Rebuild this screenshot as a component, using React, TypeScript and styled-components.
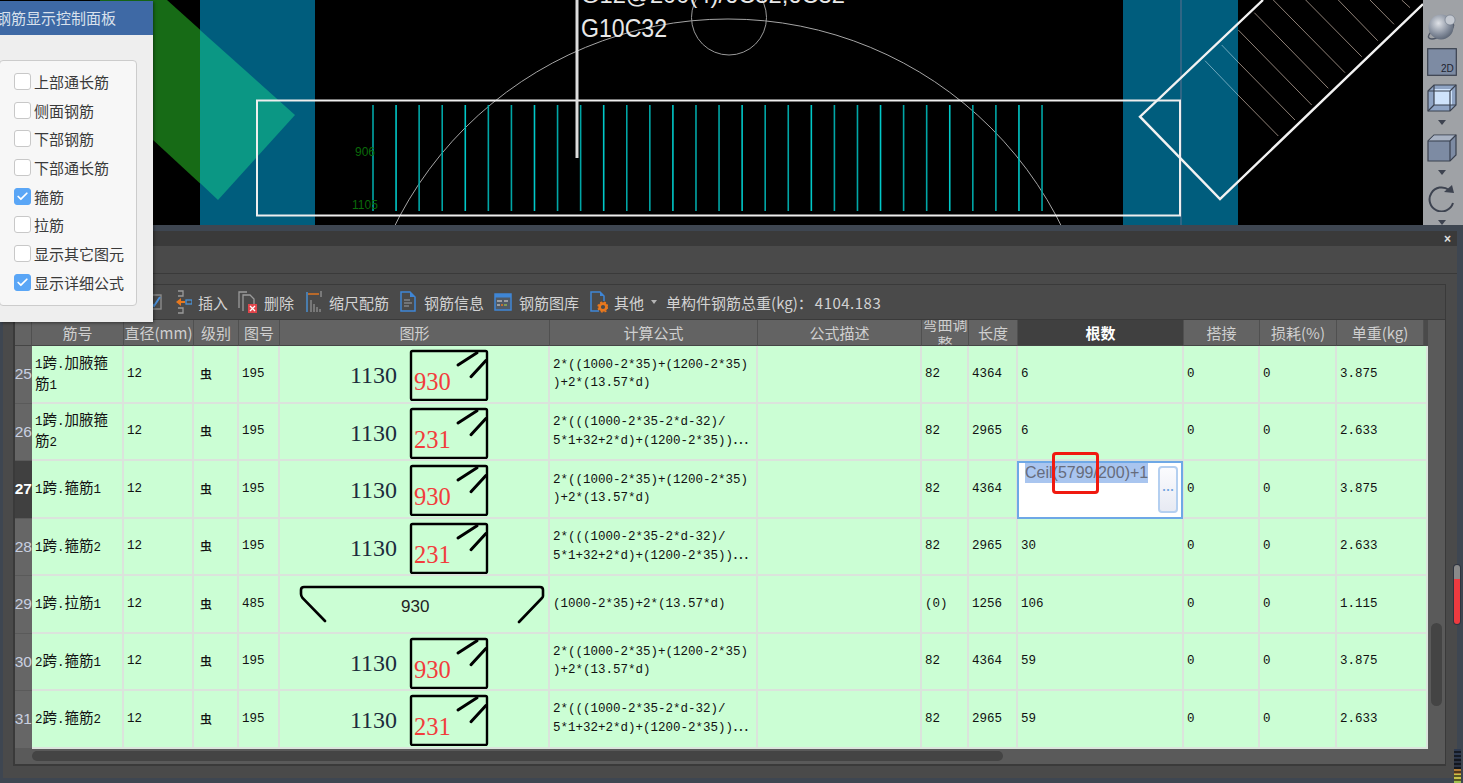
import React from 'react';
import styled, { createGlobalStyle } from 'styled-components';
import { Check } from 'lucide-react';

const CJK = '"Noto Sans CJK SC", "Noto Sans", sans-serif';
const MONO = '"Liberation Mono", "Noto Sans CJK SC", monospace';
const COLUMNS = '17px 92px 70px 45px 41px 270px 208px 164px 47px 49px 166px 76px 77px 91px';

const Global = createGlobalStyle`
  * { box-sizing: border-box; }
  html, body { margin: 0; padding: 0; background: #000; overflow: hidden; }
`;

const Screen = styled.div`
  position: relative;
  width: 1463px;
  height: 783px;
  overflow: hidden;
  display: flex;
  flex-direction: column;
  font-family: ${CJK};
`;

const TopView = styled.div`
  height: 225px;
  flex: none;
  display: flex;
  background: #000;
`;

const CanvasSvg = styled.svg`
  display: block;
  width: 1423px;
  height: 225px;
  flex: none;
`;

const ViewBar = styled.div`
  width: 40px;
  flex: none;
  background: #9fa2a6;
  padding: 12px 7px 0 4px;
  display: flex;
  flex-direction: column;
  align-items: center;
  gap: 8px;
  overflow: hidden;
`;

const ViewIcon = styled.svg`
  display: block;
  width: 30px;
  height: 28px;
  flex: none;
`;

const ViewCaret = styled.span`
  flex: none;
  width: 0;
  height: 0;
  border-left: 4px solid transparent;
  border-right: 4px solid transparent;
  border-top: 5px solid #3d4350;
  margin-bottom: 1px;
`;

const Window = styled.div`
  position: relative;
  flex: 1;
  display: flex;
  flex-direction: column;
  background: #4a4a4a;
  border-style: solid;
  border-color: #3e4651;
  border-width: 6px 6px 5px 3px;
`;

const TitleBar = styled.div`
  height: 15px;
  flex: none;
  background: #3a3a3a;
  display: flex;
  align-items: center;
  justify-content: flex-end;
  padding: 1px 6px 0 0;
  color: #e0e0e0;
  font: bold 12px "Liberation Sans", sans-serif;
`;

const TabStrip = styled.div`
  height: 28px;
  flex: none;
  border-bottom: 1px solid #3a3a3a;
`;

const Frame = styled.div`
  margin: 10px 11px 0 10px;
  height: 482px;
  border: solid #3a3a3a;
  border-width: 1px 1px 2px 2px;
  display: flex;
  flex-direction: column;
`;

const Toolbar = styled.div`
  height: 35px;
  flex: none;
  display: flex;
  align-items: center;
  padding-left: 132px;
  border-bottom: 1px solid #3a3a3a;
  color: #d2d2d2;
  font-size: 15px;
  white-space: nowrap;
`;

const Tool = styled.div<{ $gap: number; $next: number }>`
  display: flex;
  align-items: center;
  gap: ${p => p.$gap}px;
  margin-right: ${p => p.$next}px;
`;

const ToolIcon = styled.svg`
  display: block;
  flex: none;
  height: 24px;
`;

const MenuCaret = styled.span`
  width: 0;
  height: 0;
  border-left: 3px solid transparent;
  border-right: 3px solid transparent;
  border-top: 4px solid #b5b5b5;
  margin-right: 9px;
`;

const TotalValue = styled.span`
  margin-left: 2px;
  letter-spacing: 0.5px;
`;

const GridArea = styled.div`
  flex: 1;
  min-height: 0;
  display: flex;
`;

const Table = styled.div`
  width: 1413px;
  flex: none;
`;

const HeadRow = styled.div`
  height: 26px;
  display: grid;
  grid-template-columns: ${COLUMNS};
`;

const HeadCell = styled.div<{ $active?: boolean }>`
  display: flex;
  align-items: center;
  justify-content: center;
  overflow: hidden;
  text-align: center;
  background: ${p => (p.$active ? '#404040' : '#636363')};
  color: ${p => (p.$active ? '#fff' : '#cfcfcf')};
  font-size: 15px;
  font-weight: ${p => (p.$active ? 700 : 400)};
  line-height: 19px;
  border-right: 1px solid #505050;
  border-bottom: 1px solid #454545;
  &:last-child { margin-right: 4px; }
`;

const Row = styled.div`
  height: 57.5px;
  display: grid;
  grid-template-columns: ${COLUMNS};
  background: #cbfed4;
  color: #111;
  font: 12.5px/18px ${MONO};
`;

const RowNo = styled.div<{ $current?: boolean }>`
  display: flex;
  align-items: center;
  justify-content: flex-end;
  background: ${p => (p.$current ? '#404040' : '#666')};
  color: ${p => (p.$current ? '#fff' : '#c9d0e0')};
  font: ${p => (p.$current ? 700 : 400)} 15.5px "Liberation Sans", sans-serif;
  border-bottom: 1px solid #5a5a5a;
  overflow: visible;
  white-space: nowrap;
`;

const Cell = styled.div`
  position: relative;
  display: flex;
  align-items: center;
  min-width: 0;
  padding: 0 1px 0 3px;
  border-right: 2px solid #dbe3dc;
  border-bottom: 2px solid #dbe3dc;
  white-space: pre-line;
`;

const NameCell = styled(Cell)`
  padding: 4px 2px 0 3px;
  line-height: 21px;
`;

const GradeCell = styled(Cell)`
  padding: 0 0 0 6px;
`;

const GradeMark = styled.span`
  font-family: ${CJK};
  font-size: 12px;
  line-height: 1;
  font-weight: 500;
`;

const ShapeCell = styled(Cell)`
  padding: 0;
  overflow: hidden;
`;

const ShapeSvg = styled.svg`
  display: block;
  width: 268px;
  height: 55px;
  margin-left: -1px;
  flex: none;
`;

const Han = styled.span`
  font-family: ${CJK};
  font-size: 14.5px;
  line-height: 1;
`;

const Editor = styled.div`
  position: absolute;
  inset: 0 -1px -2px -1px;
  display: flex;
  justify-content: space-between;
  background: #fff;
  border: 2px solid #6ea8e6;
  padding: 0 3px 0 6px;
`;

const EditorText = styled.span`
  align-self: flex-start;
  background: #a9c5ef;
  color: #666c7c;
  font: 16px/20px "Liberation Sans", sans-serif;
`;

const EditorButton = styled.button`
  align-self: center;
  width: 20px;
  height: 47px;
  padding: 0;
  border: 2px solid #b4cff0;
  border-radius: 4px;
  background: linear-gradient(#fbfbfe, #e7eaf3);
  color: #6c9fdf;
  font: bold 12px ${CJK};
`;

const RedMark = styled.span`
  position: absolute;
  left: 34px;
  top: -9px;
  width: 47px;
  height: 42px;
  border: 3px solid #f01a10;
  border-radius: 4px;
  pointer-events: none;
`;

const VScroll = styled.div`
  flex: 1;
  background: #5a5a5a;
  padding: 303px 0 0 3px;
`;

const VThumb = styled.div`
  width: 11px;
  height: 83px;
  border-radius: 6px;
  background: #444;
`;

const HScroll = styled.div`
  flex: none;
  height: 16px;
  background: #5a5a5a;
  padding: 3px 0 0 17px;
`;

const HThumb = styled.div`
  width: 971px;
  height: 10px;
  border-radius: 5px;
  background: #444;
`;

const RedGauge = styled.div`
  position: absolute;
  left: 1450px;
  top: 333px;
  width: 8px;
  height: 61px;
  padding: 1px;
  border-radius: 4px;
  background: #2f3540;
`;

const RedGaugeFill = styled.div`
  height: 100%;
  border-radius: 3px;
  background: linear-gradient(#8a8a8a 0 14px, #ee3a3f 14px);
`;

const Meter = styled.div`
  position: absolute;
  left: 1448px;
  top: 509px;
  width: 12px;
  height: 43px;
  border-radius: 4px 0 0 0;
  background:
    repeating-linear-gradient(transparent 0 2px, rgba(0, 0, 0, 0.55) 2px 4px),
    linear-gradient(#2e3a50 0 9px, #2b3242 9px 20px, #b27c37 20px 25px, #c7c24a 25px 32px, #9fc04f 32px);
  background-origin: content-box;
  background-clip: content-box;
  padding: 9px 2px 0 3px;
  background-color: #2e3a50;
`;

const ControlPanel = styled.div`
  position: absolute;
  left: 0;
  top: 1px;
  width: 153px;
  height: 321px;
  background: #eee;
  box-shadow: 1px 1px 3px rgba(0, 0, 0, 0.45);
  overflow: hidden;
`;

const PanelHead = styled.div`
  height: 34px;
  background: #3e69a5;
  color: #d9e1ec;
  font-size: 15px;
  line-height: 34px;
  margin-bottom: 25px;
  padding-left: 0;
  text-indent: -4px;
  white-space: nowrap;
`;

const PanelBox = styled.div`
  width: 138px;
  height: 246px;
  margin-left: -1px;
  padding: 6px 0 0 14px;
  background: #f7f7f7;
  border: 1px solid #ccc;
  border-radius: 4px;
  display: flex;
  flex-direction: column;
`;

const Option = styled.label`
  height: 28.7px;
  display: flex;
  align-items: center;
  gap: 3px;
  color: #3a3a3a;
  font-size: 15px;
  white-space: nowrap;
`;

const Box = styled.span<{ $on?: boolean }>`
  width: 17px;
  height: 17px;
  flex: none;
  display: flex;
  align-items: center;
  justify-content: center;
  border-radius: 3px;
  background: ${p => (p.$on ? '#5aa6f6' : '#fff')};
  border: 1px solid ${p => (p.$on ? '#5aa6f6' : '#c8c8c8')};
  color: #fff;
`;

const OPTIONS: [string, boolean][] = [
  ['上部通长筋', false],
  ['侧面钢筋', false],
  ['下部钢筋', false],
  ['下部通长筋', false],
  ['箍筋', true],
  ['拉筋', false],
  ['显示其它图元', false],
  ['显示详细公式', true],
];

const HEADERS = ['', '筋号', '直径(mm)', '级别', '图号', '图形', '计算公式', '公式描述', '弯曲调整', '长度', '根数', '搭接', '损耗(%)', '单重(kg)'];

const FA = '2*((1000-2*35)+(1200-2*35)\n)+2*(13.57*d)';
const FB = '2*(((1000-2*35-2*d-32)/\n5*1+32+2*d)+(1200-2*35))\u22EF';

type RowData = {
  no: number;
  name: string;
  code: string;
  red?: string;
  formula: string;
  bend: string;
  len: string;
  count?: string;
  unit: string;
};

const ROWS: RowData[] = [
  { no: 25, name: '1跨.加腋箍筋1', code: '195', red: '930', formula: FA, bend: '82', len: '4364', count: '6', unit: '3.875' },
  { no: 26, name: '1跨.加腋箍筋2', code: '195', red: '231', formula: FB, bend: '82', len: '2965', count: '6', unit: '2.633' },
  { no: 27, name: '1跨.箍筋1', code: '195', red: '930', formula: FA, bend: '82', len: '4364', unit: '3.875' },
  { no: 28, name: '1跨.箍筋2', code: '195', red: '231', formula: FB, bend: '82', len: '2965', count: '30', unit: '2.633' },
  { no: 29, name: '1跨.拉筋1', code: '485', formula: '(1000-2*35)+2*(13.57*d)', bend: '(0)', len: '1256', count: '106', unit: '1.115' },
  { no: 30, name: '2跨.箍筋1', code: '195', red: '930', formula: FA, bend: '82', len: '4364', count: '59', unit: '3.875' },
  { no: 31, name: '2跨.箍筋2', code: '195', red: '231', formula: FB, bend: '82', len: '2965', count: '59', unit: '2.633' },
];

const BARS = Array.from({ length: 30 }, (_, i) => 373 + i * 23.07);
const HATCH = [
  [1238, 95, 1278.3, 136],
  [1238, 62, 1295, 120],
  [1238.3, 30, 1311.7, 105],
  [1254.3, 12.7, 1328.3, 88.3],
  [1273.3, 0, 1345, 72.7],
  [1305.7, 0, 1361.7, 56.7],
  [1338.3, 0, 1377.7, 40.7],
  [1370, 0, 1394, 24.3],
  [1401.7, 0, 1410, 7.7],
];

const Drawing = () => (
  <CanvasSvg viewBox="0 0 1423 225">
    <rect width="1423" height="225" fill="#000" />
    <polygon points="100,0 167,0 295,115 218,200 100,91" fill="#176b16" />
    <rect x="200" width="115" height="225" fill="#005d7d" />
    <rect x="1123" width="115" height="225" fill="#005d7d" />
    <polygon points="200,30 295,115 218,200 200,183" fill="#0b9784" />
    <line x1="1181" y1="0" x2="1181" y2="225" stroke="#3f6a88" strokeWidth="1.5" />
    <circle cx="728" cy="391" r="372" fill="none" stroke="#a5a5a5" strokeWidth="1" />
    <circle cx="729" cy="17.5" r="37.5" fill="none" stroke="#9a9a9a" strokeWidth="1" />
    {BARS.map((x, i) => (
      <line key={x} x1={x} y1="105" x2={x} y2="211" stroke={i % 3 === 1 ? '#00c8c8' : '#00a6a6'} strokeWidth="1.6" />
    ))}
    <rect x="257" y="100.5" width="923" height="115" fill="none" stroke="#eee" strokeWidth="2" />
    <line x1="577" y1="0" x2="577" y2="158" stroke="#ddd" strokeWidth="3" />
    <text x="581" y="3" fill="#e8e8e8" fontFamily="Liberation Sans" fontSize="24" textLength="264" lengthAdjust="spacingAndGlyphs">G12@200(4)/6C32;6C32</text>
    <text x="581" y="37" fill="#e8e8e8" fontFamily="Liberation Sans" fontSize="25" textLength="86" lengthAdjust="spacingAndGlyphs">G10C32</text>
    <text x="355" y="156" fill="#0a6a0a" fontFamily="Liberation Sans" fontSize="12">906</text>
    <text x="352" y="209" fill="#0a6a0a" fontFamily="Liberation Sans" fontSize="12">1105</text>
    <line x1="1205" y1="60.7" x2="1238" y2="95" stroke="#6ea8bd" strokeWidth="1" />
    <line x1="1221.7" y1="45" x2="1238" y2="62" stroke="#6ea8bd" strokeWidth="1" />
    {HATCH.map(([x1, y1, x2, y2]) => (
      <line key={x1} x1={x1} y1={y1} x2={x2} y2={y2} stroke="#8f8177" strokeWidth="1" />
    ))}
    <polyline points="1263,0 1140,116.7 1220,199 1423,4" fill="none" stroke="#f2f2f2" strokeWidth="2.4" />
  </CanvasSvg>
);

const Stirrup = ({ red }: { red: string }) => (
  <ShapeSvg viewBox="0 0 268 55">
    <text x="71" y="37" fontFamily="Liberation Serif" fontSize="24" fill="#1c2c3c">1130</text>
    <rect x="132" y="5" width="76" height="49" rx="1.5" fill="none" stroke="#000" strokeWidth="2.4" />
    <text x="135" y="44" fontFamily="Liberation Serif" fontSize="24.5" fill="#f23c3c">{red}</text>
    <path d="M179 19L198 6.7M192 30.7L206.7 14.7" stroke="#000" strokeWidth="3" strokeLinecap="round" fill="none" />
  </ShapeSvg>
);

const TieBar = () => (
  <ShapeSvg viewBox="0 0 268 55">
    <path d="M46 45L23.5 22Q22 20 22 18V14Q22 11 25 11H261Q264 11 264 14V20Q264 21 263 22L240 46" fill="none" stroke="#000" strokeWidth="2.6" strokeLinecap="round" />
    <text x="122" y="36" fontFamily="Liberation Sans" fontSize="17" fill="#222">930</text>
  </ShapeSvg>
);

const mixed = (s: string) =>
  s.split(/([\u4e00-\u9fff\u22ef]+)/).map((part, i) =>
    /[\u4e00-\u9fff\u22ef]/.test(part) ? <Han key={i}>{part}</Han> : <React.Fragment key={i}>{part}</React.Fragment>,
  );

const DataRow = ({ r }: { r: RowData }) => (
  <Row>
    <RowNo $current={r.no === 27}>{r.no}</RowNo>
    <NameCell><span>{mixed(r.name)}</span></NameCell>
    <Cell>12</Cell>
    <GradeCell><GradeMark>虫</GradeMark></GradeCell>
    <Cell>{r.code}</Cell>
    <ShapeCell>{r.red ? <Stirrup red={r.red} /> : <TieBar />}</ShapeCell>
    <Cell><span>{mixed(r.formula)}</span></Cell>
    <Cell />
    <Cell>{r.bend}</Cell>
    <Cell>{r.len}</Cell>
    <Cell>
      {r.count ?? (
        <>
          <Editor>
            <EditorText>Ceil(5799/200)+1</EditorText>
            <EditorButton>{'\u22EF'}</EditorButton>
          </Editor>
          <RedMark />
        </>
      )}
    </Cell>
    <Cell>0</Cell>
    <Cell>0</Cell>
    <Cell>{r.unit}</Cell>
  </Row>
);

export default function App() {
  return (
    <Screen>
      <Global />
      <TopView>
        <Drawing />
        <ViewBar>
          <ViewIcon viewBox="0 0 30 28">
            <defs>
              <radialGradient id="ball" cx="40%" cy="35%" r="75%">
                <stop offset="0" stopColor="#dfe2e7" />
                <stop offset="0.6" stopColor="#848d9c" />
                <stop offset="1" stopColor="#4f5969" />
              </radialGradient>
            </defs>
            <ellipse cx="14" cy="19" rx="14" ry="5" transform="rotate(-28 14 19)" fill="none" stroke="#4d5564" strokeWidth="1.4" />
            <circle cx="14" cy="15" r="12.5" fill="url(#ball)" />
            <circle cx="23" cy="8" r="5" fill="#c4c9d1" stroke="#6c7584" strokeWidth="0.6" />
          </ViewIcon>
          <ViewIcon viewBox="0 0 30 28">
            <rect x="0.7" y="0.7" width="28.6" height="26.6" fill="#7d8ba3" stroke="#39404e" strokeWidth="1.2" />
            <text x="14" y="24" fontFamily="Liberation Sans" fontSize="10" fill="#1e2430">2D</text>
          </ViewIcon>
          <ViewIcon viewBox="0 0 30 28">
            <path d="M1 7L7 1H29V21L23 27H1Z" fill="#8fa4c4" stroke="#39404e" strokeWidth="1.2" />
            <rect x="7" y="5" width="18" height="16" fill="#cfe3fb" />
            <path d="M1 7H23V27M23 7L29 1M7 1V21H29M7 21L1 27" fill="none" stroke="#39404e" strokeWidth="1.2" />
          </ViewIcon>
          <ViewCaret />
          <ViewIcon viewBox="0 0 30 28">
            <path d="M1 7L7 1H29V21L23 27H1Z" fill="#7d8ba3" stroke="#39404e" strokeWidth="1.2" />
            <path d="M1.5 7L7 1.6H28L23 6.5Z" fill="#a9b3c4" />
            <path d="M1 7H23V27M23 7L29 1" fill="none" stroke="#39404e" strokeWidth="1.2" />
          </ViewIcon>
          <ViewCaret />
          <ViewIcon viewBox="0 0 30 28">
            <path d="M26 19A12 12 0 1 1 22 6" fill="none" stroke="#3d4350" strokeWidth="2" />
            <path d="M17 8L27 9L25 1Z" fill="#3d4350" />
          </ViewIcon>
          <ViewCaret />
        </ViewBar>
      </TopView>

      <Window>
        <TitleBar>×</TitleBar>
        <TabStrip />
        <Frame>
          <Toolbar>
            <Tool $gap={0} $next={14}>
              <ToolIcon width="15" viewBox="0 0 15 24">
                <rect x="1" y="5" width="13" height="14" fill="none" stroke="#8b8b8b" strokeWidth="1.4" />
                <path d="M3 12L7 16L13 7" fill="none" stroke="#4a8fd8" strokeWidth="2" />
              </ToolIcon>
            </Tool>
            <Tool $gap={6} $next={10}>
              <ToolIcon width="16" viewBox="0 0 16 24">
                <path d="M2 1H7V6H2M2 18H7V23H2" fill="none" stroke="#9a9a9a" strokeWidth="1.3" />
                <path d="M0 12L5 8V11H9V13H5V16Z" fill="#e8781e" />
                <rect x="10" y="10" width="6" height="4" fill="none" stroke="#4a93d8" strokeWidth="1.3" />
              </ToolIcon>
              插入
            </Tool>
            <Tool $gap={6} $next={12}>
              <ToolIcon width="20" viewBox="0 0 20 24">
                <path d="M1 18V2H9M5 21V5H12L16 9V15" fill="none" stroke="#9a9a9a" strokeWidth="1.3" />
                <rect x="10" y="14" width="9" height="9" fill="#e0444a" />
                <path d="M12 16L17 21M17 16L12 21" stroke="#fff" strokeWidth="1.3" />
              </ToolIcon>
              删除
            </Tool>
            <Tool $gap={7} $next={11}>
              <ToolIcon width="16" viewBox="0 0 16 24">
                <path d="M1 2V22" stroke="#4a93d8" strokeWidth="1.4" />
                <path d="M2 4H13" stroke="#e8781e" strokeWidth="1.4" />
                <path d="M15 1V7" stroke="#9a9a9a" strokeWidth="1.2" />
                <path d="M5 22V10M8 22V14M11 22V17M14 22V19" stroke="#8c8c8c" strokeWidth="1.4" />
              </ToolIcon>
              缩尺配筋
            </Tool>
            <Tool $gap={8} $next={10}>
              <ToolIcon width="16" viewBox="0 0 16 24">
                <path d="M1 2H10L15 7V21H1Z" fill="none" stroke="#3f86d6" strokeWidth="1.5" />
                <path d="M10 2V7H15Z" fill="#3f86d6" />
                <path d="M4 10H10M4 13H12M4 16H9" stroke="#9aa0a8" strokeWidth="1.2" />
              </ToolIcon>
              钢筋信息
            </Tool>
            <Tool $gap={7} $next={11}>
              <ToolIcon width="18" viewBox="0 0 18 24">
                <rect x="1" y="4" width="16" height="16" fill="#505a66" stroke="#3f86d6" strokeWidth="1.5" />
                <rect x="1" y="4" width="16" height="3.5" fill="#3f86d6" />
                <path d="M3 11H8M10 11H14M3 15H6" stroke="#b8b8b8" strokeWidth="1.3" />
                <path d="M7 15H9" stroke="#e8781e" strokeWidth="1.3" />
                <path d="M10 15H13" stroke="#9ac04a" strokeWidth="1.3" />
              </ToolIcon>
              钢筋图库
            </Tool>
            <Tool $gap={6} $next={7}>
              <ToolIcon width="18" viewBox="0 0 18 24">
                <path d="M9 21H1V2H10L14 6V11" fill="none" stroke="#3f86d6" strokeWidth="1.5" />
                <path d="M10 2V6H14Z" fill="#3f86d6" />
                <circle cx="13" cy="17" r="3.4" fill="none" stroke="#e8781e" strokeWidth="2.6" />
                <circle cx="13" cy="17" r="5" fill="none" stroke="#e8781e" strokeWidth="1.4" strokeDasharray="2 2" />
              </ToolIcon>
              其他
            </Tool>
            <MenuCaret />
            <span>单构件钢筋总重(kg)：<TotalValue>4104.183</TotalValue></span>
          </Toolbar>
          <GridArea>
            <Table>
              <HeadRow>
                {HEADERS.map((h, i) => (
                  <HeadCell key={i} $active={h === '根数'}>{h}</HeadCell>
                ))}
              </HeadRow>
              {ROWS.map(r => (
                <DataRow key={r.no} r={r} />
              ))}
            </Table>
            <VScroll>
              <VThumb />
            </VScroll>
          </GridArea>
          <HScroll>
            <HThumb />
          </HScroll>
        </Frame>
        <RedGauge>
          <RedGaugeFill />
        </RedGauge>
        <Meter />
      </Window>

      <ControlPanel>
        <PanelHead>钢筋显示控制面板</PanelHead>
        <PanelBox>
          {OPTIONS.map(([label, on]) => (
            <Option key={label}>
              <Box $on={on}>{on && <Check size={13} strokeWidth={3.2} />}</Box>
              {label}
            </Option>
          ))}
        </PanelBox>
      </ControlPanel>
    </Screen>
  );
}
